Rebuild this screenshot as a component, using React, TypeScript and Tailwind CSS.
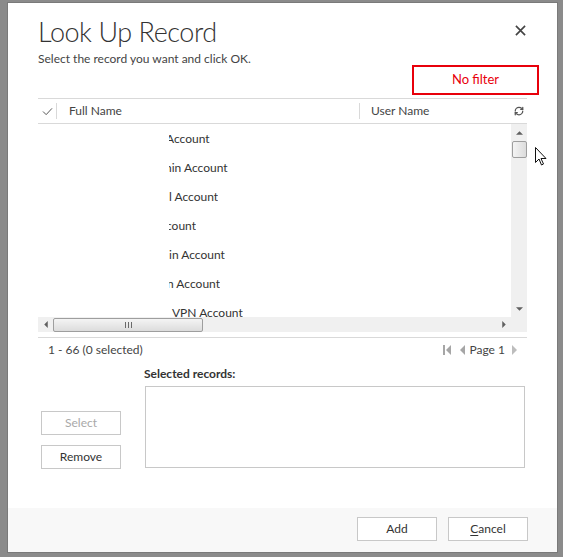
import { RefreshCw } from "lucide-react";

const rows = [
  { text: "Account", shift: -3 },
  { text: "nin Account", shift: -4 },
  { text: "l Account", shift: 0 },
  { text: "count", shift: -3 },
  { text: "in Account", shift: 0 },
  { text: "n Account", shift: -2 },
  { text: "VPN Account", shift: 3 },
];

function Triangle({ dir, className }: { dir: "up" | "down" | "left" | "right"; className?: string }) {
  const pts = {
    up: "0,5 5,0 10,5",
    down: "0,0 5,5 10,0",
    left: "5,0 0,5 5,10",
    right: "0,0 5,5 0,10",
  }[dir];
  const vb = dir === "up" || dir === "down" ? "0 0 10 5" : "0 0 5 10";
  return (
    <svg viewBox={vb} className={className}>
      <polygon points={pts} fill="currentColor" />
    </svg>
  );
}

export default function App() {
  return (
    <div className="w-[563px] h-[557px] bg-[#8b8b8b] pt-[2px] pl-[7px] relative overflow-hidden font-[Lato,Open_Sans,sans-serif] text-[#444]">
      <div className="w-[551px] h-[551px] bg-white border border-[#7a7a7a] flex flex-col">
        {/* Header */}
        <div className="px-[30px] pt-[11px] relative">
          <h1 className="text-[27px] leading-[36px] font-light text-[#333] tracking-[-0.45px]">Look Up Record</h1>
          <p className="text-[12px] leading-[16px] mt-[1px] text-[#444]">Select the record you want and click OK.</p>
          <button className="absolute right-[30px] top-[20px] w-[14px] h-[14px] flex items-center justify-center">
            <svg viewBox="0 0 12 12" className="w-[11px] h-[11px]">
              <path d="M1 1 L11 11 M11 1 L1 11" stroke="#444" strokeWidth="1.8" />
            </svg>
          </button>
          <div className="flex justify-end mt-[-2px] mr-[-12px]">
            <div className="w-[127px] h-[30px] border-2 border-[#e8000b] text-[#e8000b] text-[13px] flex items-center justify-center">
              No filter
            </div>
          </div>
        </div>

        {/* Grid */}
        <div className="mx-[30px] mt-[3px] w-[489px] border-t border-[#d9d9d9]">
          <div className="h-[25px] flex items-center border-b border-[#d9d9d9] text-[12px] text-[#444]">
            <div className="w-[18px] flex justify-center">
              <svg viewBox="0 0 12 10" className="w-[11px] h-[9px]">
                <path d="M1 5 L4.5 8.5 L11 1.5" stroke="#555" strokeWidth="1.1" fill="none" />
              </svg>
            </div>
            <div className="w-px h-[16px] bg-[#d9d9d9]" />
            <div className="w-[302px] pl-[12px]">Full Name</div>
            <div className="w-px h-[16px] bg-[#d9d9d9]" />
            <div className="flex-1 pl-[11px]">User Name</div>
            <div className="w-[16px] flex justify-center">
              <RefreshCw size={10} strokeWidth={3} color="#555" />
            </div>
          </div>

          <div className="flex h-[193px]">
            <div className="flex-1 text-[12px] text-[#333]">
              {rows.map((r) => (
                <div key={r.text} className="h-[29px] flex items-center">
                  <div className="ml-[131px] overflow-hidden">
                    <span className="block whitespace-nowrap" style={{ marginLeft: r.shift }}>
                      {r.text}
                    </span>
                  </div>
                </div>
              ))}
            </div>
            {/* vertical scrollbar */}
            <div className="w-[16px] bg-[#f0f0f0] flex flex-col items-center">
              <div className="h-[17px] flex items-center justify-center">
                <Triangle dir="up" className="w-[7px] h-[4px] text-[#606060]" />
              </div>
              <div className="w-[15px] h-[17px] border border-[#9e9e9e] rounded-[2px] bg-gradient-to-r from-[#f4f4f4] to-[#dcdcdc]" />
              <div className="flex-1" />
              <div className="h-[17px] flex items-center justify-center">
                <Triangle dir="down" className="w-[7px] h-[4px] text-[#606060]" />
              </div>
            </div>
          </div>

          {/* horizontal scrollbar */}
          <div className="flex h-[15px]">
            <div className="flex-1 bg-[#f0f0f0] flex items-center">
              <div className="w-[15px] flex justify-center">
                <Triangle dir="left" className="w-[4px] h-[7px] text-[#606060]" />
              </div>
              <div className="w-[150px] h-[14px] border border-[#9e9e9e] rounded-[2px] bg-gradient-to-b from-[#f4f4f4] to-[#dcdcdc] flex items-center justify-center">
                <svg viewBox="0 0 7 6" className="w-[7px] h-[6px]">
                  <path d="M0.5 0 V6 M3.5 0 V6 M6.5 0 V6" stroke="#6a6a6a" strokeWidth="1" />
                </svg>
              </div>
              <div className="flex-1" />
              <div className="w-[15px] flex justify-center">
                <Triangle dir="right" className="w-[4px] h-[7px] text-[#606060]" />
              </div>
            </div>
            <div className="w-[16px] bg-[#f0f0f0]" />
          </div>
          <div className="mt-[5px] border-t border-[#d9d9d9]" />

          {/* status row */}
          <div className="h-[24px] flex items-center text-[12px] text-[#444]">
            <span className="ml-[10px]">1 - 66 (0 selected)</span>
            <div className="flex-1" />
            <div className="flex items-center mr-[10px]">
              <svg viewBox="0 0 9 10" className="w-[9px] h-[10px] mr-[8px]">
                <rect x="0" y="0" width="2" height="10" fill="#a6a6a6" />
                <polygon points="8,0 3,5 8,10" fill="#a6a6a6" />
              </svg>
              <Triangle dir="left" className="w-[5px] h-[10px] text-[#a6a6a6] mr-[5px]" />
              <span className="text-[#444]">Page 1</span>
              <Triangle dir="right" className="w-[5px] h-[10px] text-[#bdbdbd] ml-[7px]" />
            </div>
          </div>
        </div>

        {/* selected records */}
        <div className="flex mx-[33px] mt-[4px]">
          <div className="w-[80px] flex flex-col pt-[45px] gap-[10px]">
            <button className="w-[80px] h-[24px] border border-[#c8c8c8] text-[12px] text-[#a9a9a9]">Select</button>
            <button className="w-[80px] h-[24px] border border-[#c8c8c8] text-[12px] text-[#333]">Remove</button>
          </div>
          <div className="ml-[24px] flex-1 flex flex-col">
            <div className="text-[12px] font-bold text-[#333] leading-[16px] ml-[-1px]">Selected records:</div>
            <div className="mt-[4px] w-[380px] h-[82px] border border-[#c8c8c8]" />
          </div>
        </div>

        <div className="flex-1" />
        {/* footer */}
        <div className="h-[44px] bg-[#f8f8f8] flex items-start justify-end pt-[9px] pr-[29px] gap-[11px]">
          <button className="w-[80px] h-[24px] border border-[#c8c8c8] bg-white text-[12px] text-[#333]">Add</button>
          <button className="w-[80px] h-[24px] border border-[#c8c8c8] bg-white text-[12px] text-[#333]">
            <span className="underline underline-offset-2">C</span>ancel
          </button>
        </div>
      </div>

      {/* mouse cursor */}
      <svg viewBox="0 0 12 20" className="absolute left-[535px] top-[147px] w-[12px] h-[20px]">
        <path d="M0.5 0.5 V15.5 L4 12 L6.5 18 L8.5 17 L6 11.5 H11 Z" fill="white" stroke="#111" strokeWidth="1" />
      </svg>
    </div>
  );
}
